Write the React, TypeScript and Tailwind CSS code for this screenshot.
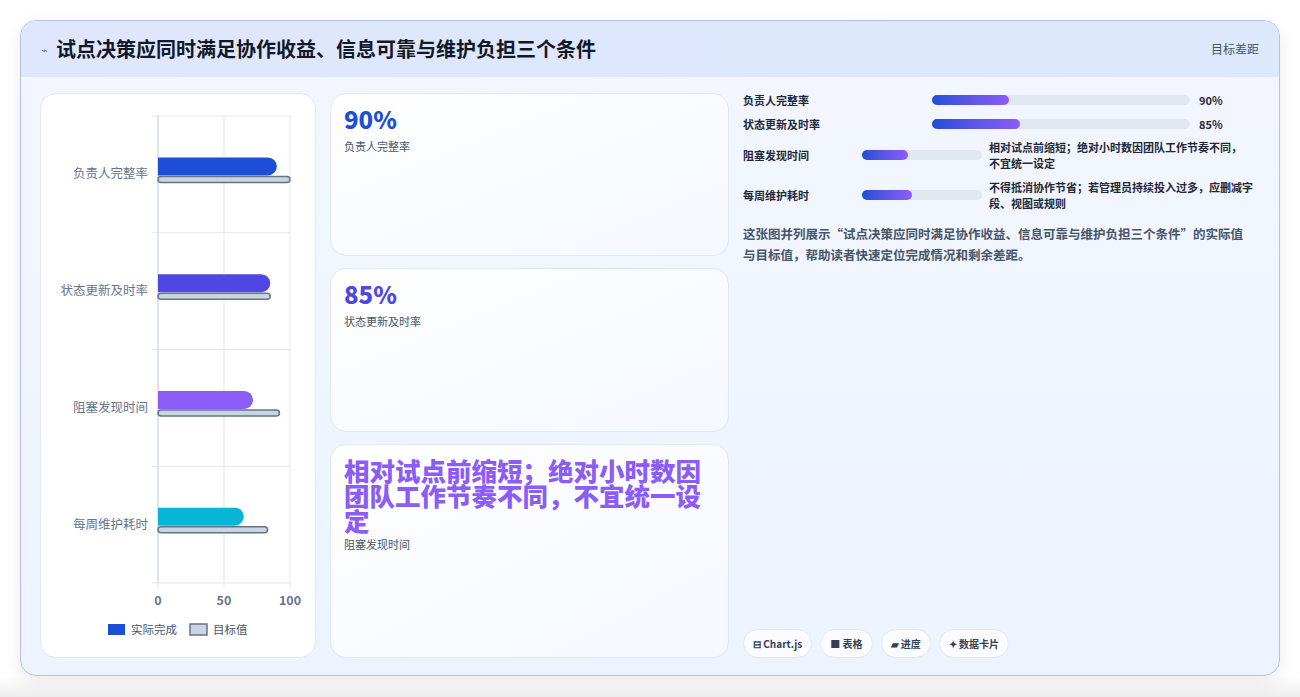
import React from 'react';

const font = { fontFamily: '"Noto Sans CJK SC", "Noto Sans", sans-serif' };

const rows = [
  { label: '负责人完整率', actual: 90, target: 100, color: '#1d4ed8' },
  { label: '状态更新及时率', actual: 85, target: 85, color: '#4f46e5' },
  { label: '阻塞发现时间', actual: 72, target: 92, color: '#8b5cf6' },
  { label: '每周维护耗时', actual: 65, target: 83, color: '#06b6d4' },
];

function Chart() {
  const x0 = 117, x1 = 249, top = 22, rowH = 116.75;
  const sx = (v: number) => x0 + ((x1 - x0) * v) / 100;
  return (
    <svg width="275" height="563" className="block">
      {[0, 50, 100].map((v) => (
        <line key={v} x1={sx(v)} x2={sx(v)} y1={top} y2={top + rowH * 4 + 6} stroke="#e5e7eb" />
      ))}
      {[0, 1, 2, 3, 4].map((i) => (
        <line key={i} x1={x0 - 6} x2={x1} y1={top + rowH * i} y2={top + rowH * i} stroke="#e5e7eb" />
      ))}
      <line x1={x0} x2={x0} y1={top} y2={top + rowH * 4} stroke="#cbd5e1" />
      {rows.map((r, i) => {
        const cy = top + rowH * i + rowH / 2;
        return (
          <g key={r.label}>
            <text x={x0 - 10} y={cy + 4} textAnchor="end" fontSize="12.5" fill="#64748b" style={font}>{r.label}</text>
            <path d={`M${x0} ${cy - 17} H${sx(r.actual) - 9} a9 9 0 0 1 0 18 H${x0} Z`} fill={r.color} />
            <rect x={x0} y={cy + 2} width={sx(r.target) - x0} height={6} rx={3} fill="#cbd5e1" stroke="#64748b" strokeWidth="1.5" />
          </g>
        );
      })}
      {[0, 50, 100].map((v) => (
        <text key={v} x={sx(v)} y={top + rowH * 4 + 22} textAnchor="middle" fontSize="12.5" fontWeight="600" fill="#64748b" style={font}>{v}</text>
      ))}
      <rect x={67} y={530} width={17} height={11} fill="#1d4ed8" />
      <text x={90} y={540} fontSize="11.5" fill="#475569" style={font}>实际完成</text>
      <rect x={149} y={530} width={17} height={11} fill="#cbd5e1" stroke="#64748b" strokeWidth="1.5" />
      <text x={172} y={540} fontSize="11.5" fill="#475569" style={font}>目标值</text>
    </svg>
  );
}

function Stat({ value, label, color, big, h }: { value: string; label: string; color: string; big?: boolean; h: string }) {
  return (
    <div className={`${h} rounded-2xl border border-[#e2e8f0] bg-gradient-to-br from-white to-[#f5f8ff] px-[13px] pt-[10px]`}>
      <div className={`${big ? 'text-[25.5px] leading-[25px] pt-[2px] pr-[6px]' : 'text-[24px] leading-[30px]'} font-extrabold`} style={{ color }}>{value}</div>
      <div className="mt-[4px] text-[11px] text-[#475569]">{label}</div>
    </div>
  );
}

function Bar({ pct }: { pct: number }) {
  return (
    <div className="h-[10px] w-full rounded-full bg-[#e2e8f0]">
      <div className="h-full rounded-full bg-gradient-to-r from-[#1d4ed8] to-[#8b5cf6]" style={{ width: `${pct}%` }} />
    </div>
  );
}

export default function App() {
  return (
    <div className="h-[697px] w-[1300px] bg-[linear-gradient(#ffffff_0,#ffffff_676px,#ededed_697px)] pt-[20px] pl-[20px]" style={font}>
      <div className="flex h-[656px] w-[1260px] flex-col overflow-hidden rounded-2xl border border-[#b4c2ee] bg-gradient-to-b from-[#f3f6ff] to-[#edf4ff] shadow-[0_6px_18px_rgba(0,0,0,0.08)]">
        <div className="flex h-[56px] shrink-0 items-center justify-between bg-gradient-to-r from-[#e0e6fd] to-[#dce8fc] px-[20px]">
          <div className="flex items-center gap-[8px]">
            <span className="text-[11px] text-[#4f6ef2]">⌁</span>
            <h1 className="text-[20px] font-bold text-[#111827]">试点决策应同时满足协作收益、信息可靠与维护负担三个条件</h1>
          </div>
          <span className="text-[12px] text-[#475569]">目标差距</span>
        </div>
        <div className="flex flex-1 gap-[14px] px-[19px] pt-[16px] pb-[19px]">
          <div className="w-[276px] rounded-2xl border border-[#e2e8f0] bg-white"><Chart /></div>
          <div className="flex w-[399px] flex-col gap-[12px]">
            <Stat h="h-[163px]" value="90%" label="负责人完整率" color="#1d4ed8" />
            <Stat h="h-[164px]" value="85%" label="状态更新及时率" color="#4f46e5" />
            <Stat h="flex-1" big value="相对试点前缩短；绝对小时数因团队工作节奏不同，不宜统一设定" label="阻塞发现时间" color="#8b5cf6" />
          </div>
          <div className="flex flex-1 flex-col text-[11px] font-semibold text-[#1f2937]">
            <div className="flex items-center h-[14px]">
              <span className="w-[189px]">负责人完整率</span>
              <div className="w-[258px]"><Bar pct={30} /></div>
              <span className="ml-[9px]">90%</span>
            </div>
            <div className="mt-[10px] flex items-center h-[14px]">
              <span className="w-[189px]">状态更新及时率</span>
              <div className="w-[258px]"><Bar pct={34} /></div>
              <span className="ml-[9px]">85%</span>
            </div>
            <div className="mt-[8px] flex items-center">
              <span className="w-[119px]">阻塞发现时间</span>
              <div className="w-[120px] shrink-0"><Bar pct={38} /></div>
              <span className="ml-[7px] w-[258px] leading-[16px]">相对试点前缩短；绝对小时数因团队工作节奏不同，不宜统一设定</span>
            </div>
            <div className="mt-[8px] flex items-center">
              <span className="w-[119px]">每周维护耗时</span>
              <div className="w-[120px] shrink-0"><Bar pct={42} /></div>
              <span className="ml-[7px] w-[270px] leading-[16px]">不得抵消协作节省；若管理员持续投入过多，应删减字段、视图或规则</span>
            </div>
            <p className="mt-[12px] w-[512px] text-[12.5px] font-semibold leading-[21px] text-[#475569]">这张图并列展示“试点决策应同时满足协作收益、信息可靠与维护负担三个条件”的实际值与目标值，帮助读者快速定位完成情况和剩余差距。</p>
            <div className="mt-auto flex gap-[8px] text-[10px] font-semibold text-[#334155]">
              {['⊟ Chart.js', '■ 表格', '▰ 进度', '✦ 数据卡片'].map((t) => (
                <span key={t} className="rounded-full border border-[#e5e7eb] bg-white/70 px-[9px] py-[6px]">{t}</span>
              ))}
            </div>
          </div>
        </div>
      </div>
    </div>
  );
}
